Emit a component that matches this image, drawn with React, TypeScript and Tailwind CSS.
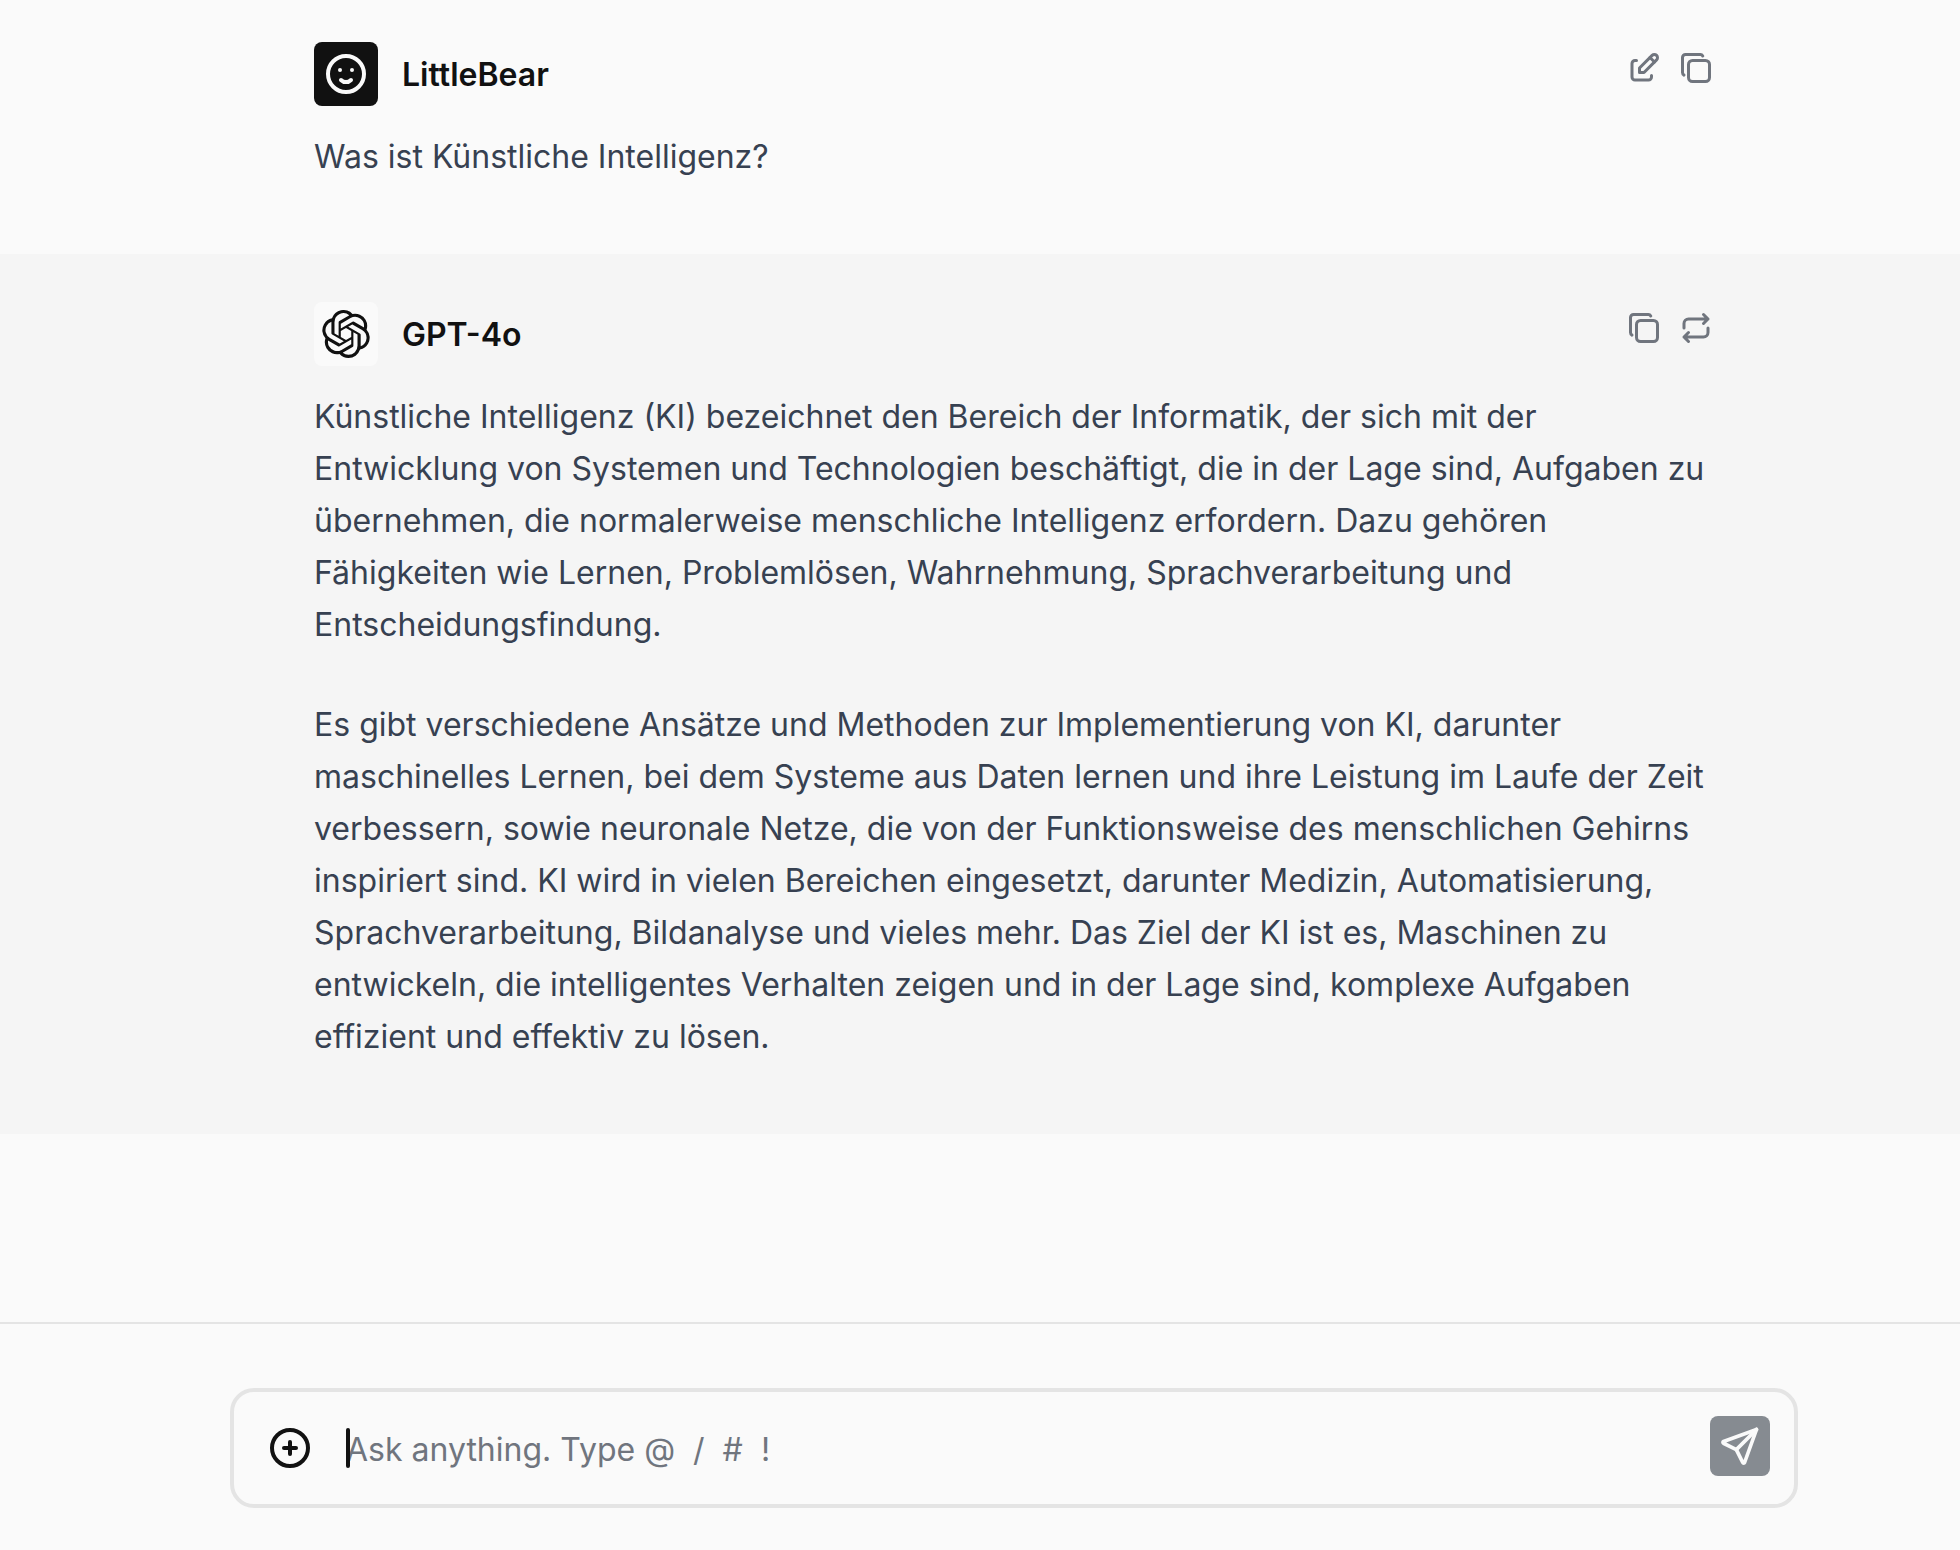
import { useState, type ReactNode } from "react";
import { SiOpenai } from "react-icons/si";

type IconProps = { className: string; children: ReactNode };

function Icon({ className, children }: IconProps) {
  return (
    <svg
      viewBox="0 0 24 24"
      fill="none"
      stroke="currentColor"
      strokeWidth={2}
      strokeLinecap="round"
      strokeLinejoin="round"
      aria-hidden="true"
      className={className}
    >
      {children}
    </svg>
  );
}

const CopyIcon = () => (
  <Icon className="size-9">
    <rect x="7" y="7" width="14" height="14" rx="2.667" />
    <path d="M4.012 16.737a2.005 2.005 0 0 1 -1.012 -1.737v-10c0 -1.1 .9 -2 2 -2h10c.75 0 1.158 .385 1.5 1" />
  </Icon>
);

const EditIcon = () => (
  <Icon className="size-9">
    <path d="M7 7h-1a2 2 0 0 0 -2 2v9a2 2 0 0 0 2 2h9a2 2 0 0 0 2 -2v-1" />
    <path d="M20.385 6.585a2.1 2.1 0 0 0 -2.97 -2.97l-8.415 8.385v3h3l8.385 -8.415z" />
    <path d="M16 5l3 3" />
  </Icon>
);

const RepeatIcon = () => (
  <Icon className="size-9">
    <path d="M4 12v-3a3 3 0 0 1 3 -3h13m-3 -3l3 3l-3 3" />
    <path d="M20 12v3a3 3 0 0 1 -3 3h-13m3 3l-3 -3l3 -3" />
  </Icon>
);

const SmileIcon = () => (
  <Icon className="size-12">
    <circle cx="12" cy="12" r="9" />
    <path d="M9 10l.01 0" />
    <path d="M15 10l.01 0" />
    <path d="M9.5 15a3.5 3.5 0 0 0 5 0" />
  </Icon>
);

const PlusIcon = () => (
  <Icon className="size-12">
    <circle cx="12" cy="12" r="9" />
    <path d="M9 12h6" />
    <path d="M12 9v6" />
  </Icon>
);

const SendIcon = () => (
  <Icon className="size-11">
    <path d="M10 14l11 -11" />
    <path d="M21 3l-6.5 18a.55 .55 0 0 1 -1 0l-3.5 -7l-7 -3.5a.55 .55 0 0 1 0 -1l18 -6.5" />
  </Icon>
);

function IconButton({ label, children }: { label: string; children: ReactNode }) {
  return (
    <button type="button" aria-label={label} className="text-[#70757e] hover:text-gray-700">
      {children}
    </button>
  );
}

type MessageProps = {
  name: string;
  avatar: ReactNode;
  actions: ReactNode;
  paragraphs: string[];
  className: string;
};

function Message({ name, avatar, actions, paragraphs, className }: MessageProps) {
  return (
    <article className={className}>
      <div className="mx-auto max-w-[1400px]">
        <header className="flex items-start justify-between">
          <div className="flex items-center gap-6">
            {avatar}
            <h2 className="pt-0.5 text-[32px] leading-12 font-semibold text-[#111111]">{name}</h2>
          </div>
          <div className="flex gap-4 pt-2">{actions}</div>
        </header>
        <div className="mt-[25px] flex flex-col gap-12 text-[32px] leading-[52px] text-[#374151]">
          {paragraphs.map((text) => (
            <p key={text}>{text}</p>
          ))}
        </div>
      </div>
    </article>
  );
}

export default function App() {
  const [draft, setDraft] = useState("");

  return (
    <div className="flex min-h-screen flex-col bg-[#fafafa] font-['Inter',sans-serif]">
      <main className="flex-1">
        <Message
          name="LittleBear"
          className="pt-[42px] pb-[71px] pl-[68px]"
          avatar={
            <div className="flex size-16 items-center justify-center rounded-lg bg-[#111111] text-[#fafafa]">
              <SmileIcon />
            </div>
          }
          actions={
            <>
              <IconButton label="Edit message"><EditIcon /></IconButton>
              <IconButton label="Copy message"><CopyIcon /></IconButton>
            </>
          }
          paragraphs={["Was ist Künstliche Intelligenz?"]}
        />
        <Message
          name="GPT-4o"
          className="bg-[#f5f5f5] pt-12 pb-[71px] pl-[68px]"
          avatar={
            <div className="flex size-16 items-center justify-center rounded-lg bg-[#fafafa] text-[#111111]">
              <SiOpenai className="size-12" aria-hidden="true" />
            </div>
          }
          actions={
            <>
              <IconButton label="Copy reply"><CopyIcon /></IconButton>
              <IconButton label="Regenerate reply"><RepeatIcon /></IconButton>
            </>
          }
          paragraphs={[
            "Künstliche Intelligenz (KI) bezeichnet den Bereich der Informatik, der sich mit der Entwicklung von Systemen und Technologien beschäftigt, die in der Lage sind, Aufgaben zu übernehmen, die normalerweise menschliche Intelligenz erfordern. Dazu gehören Fähigkeiten wie Lernen, Problemlösen, Wahrnehmung, Sprachverarbeitung und Entscheidungsfindung.",
            "Es gibt verschiedene Ansätze und Methoden zur Implementierung von KI, darunter maschinelles Lernen, bei dem Systeme aus Daten lernen und ihre Leistung im Laufe der Zeit verbessern, sowie neuronale Netze, die von der Funktionsweise des menschlichen Gehirns inspiriert sind. KI wird in vielen Bereichen eingesetzt, darunter Medizin, Automatisierung, Sprachverarbeitung, Bildanalyse und vieles mehr. Das Ziel der KI ist es, Maschinen zu entwickeln, die intelligentes Verhalten zeigen und in der Lage sind, komplexe Aufgaben effizient und effektiv zu lösen.",
          ]}
        />
      </main>

      <footer className="border-t-2 border-[#e4e4e4] pt-16 pb-[42px] pl-[68px]">
        <form
          onSubmit={(event) => event.preventDefault()}
          className="mx-auto flex max-w-[1568px] items-start rounded-3xl border-4 border-[#e4e4e4] py-6 pr-6 pl-8"
        >
          <button type="button" aria-label="Attach a file" className="py-2 text-[#111111]">
            <PlusIcon />
          </button>
          <div className="relative ml-8 flex-1 pt-2 pb-1.5">
            <input
              type="text"
              aria-label="Message"
              value={draft}
              onChange={(event) => setDraft(event.target.value)}
              placeholder={"Ask anything. Type @\u00a0 /\u00a0 #\u00a0 !"}
              className="block w-full bg-transparent pt-0.5 text-[32px] leading-12 text-[#111111] caret-transparent outline-none placeholder:text-[#70757e]"
            />
            {draft === "" && (
              <span aria-hidden="true" className="absolute top-3 left-0 h-10 w-1 rounded-full bg-[#111111]" />
            )}
          </div>
          <button
            type="submit"
            aria-label="Send message"
            className="flex size-[60px] items-center justify-center rounded-lg bg-[#868b91] text-[#fafafa]"
          >
            <SendIcon />
          </button>
        </form>
      </footer>
    </div>
  );
}
